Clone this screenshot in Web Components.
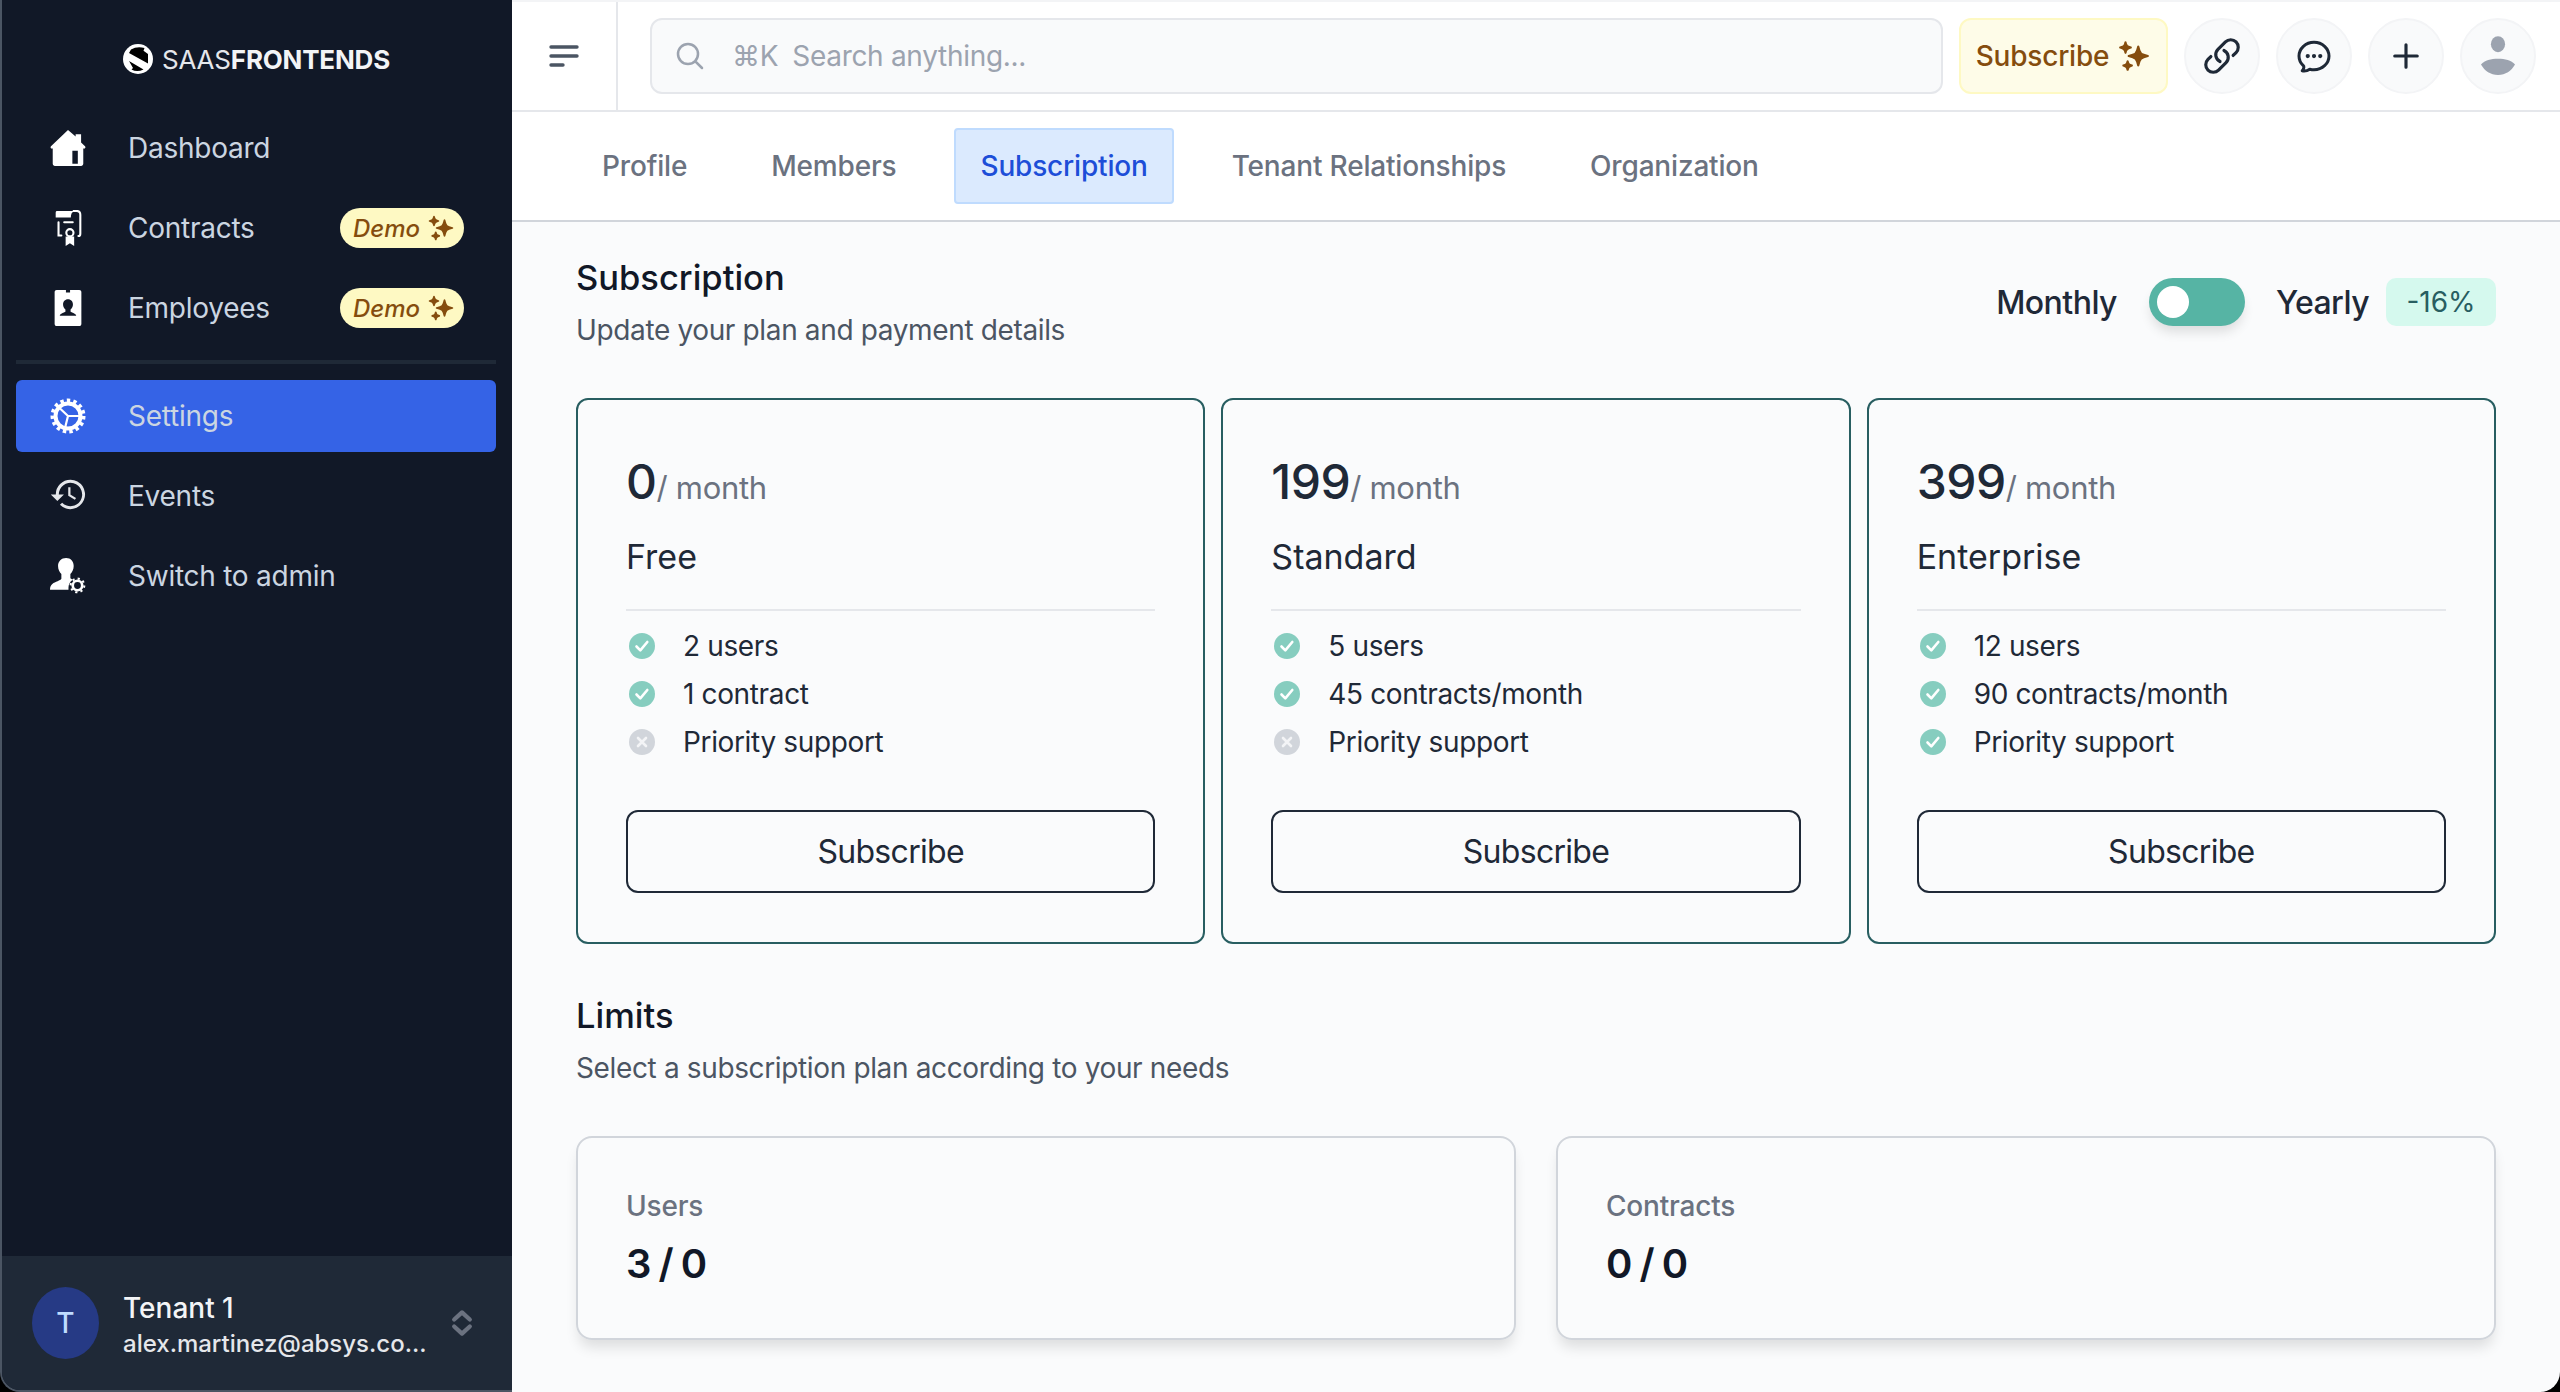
<!DOCTYPE html>
<html lang="en">
<head>
<meta charset="utf-8">
<title>Subscription</title>
<style>
    html, body { margin: 0; height: 100%; background: #000; overflow: hidden; }
    body { font-family: Inter, "Liberation Sans", sans-serif; }
</style>
</head>
<body>
<app-shell>
    <side-bar slot="side">
        <nav-item icon="home" label="Dashboard"></nav-item>
        <nav-item icon="contract" label="Contracts"><demo-badge></demo-badge></nav-item>
        <nav-item icon="badge" label="Employees"><demo-badge></demo-badge></nav-item>
        <nav-rule></nav-rule>
        <nav-item icon="gear" label="Settings" active></nav-item>
        <nav-item icon="history" label="Events"></nav-item>
        <nav-item icon="admin" label="Switch to admin"></nav-item>
        <tenant-card slot="foot" name="Tenant 1" email="alex.martinez@absys.co..."></tenant-card>
    </side-bar>
    <top-bar slot="top"></top-bar>
    <tab-bar slot="top">
        <tab-item>Profile</tab-item>
        <tab-item>Members</tab-item>
        <tab-item active>Subscription</tab-item>
        <tab-item>Tenant Relationships</tab-item>
        <tab-item>Organization</tab-item>
    </tab-bar>
    <page-section heading="Subscription" text="Update your plan and payment details">
        <billing-switch slot="aside"></billing-switch>
    </page-section>
    <plan-grid>
        <plan-card price="0" name="Free" features="2 users|1 contract|!Priority support"></plan-card>
        <plan-card price="199" name="Standard" features="5 users|45 contracts/month|!Priority support"></plan-card>
        <plan-card price="399" name="Enterprise" features="12 users|90 contracts/month|Priority support"></plan-card>
    </plan-grid>
    <page-section heading="Limits" text="Select a subscription plan according to your needs" class="limits"></page-section>
    <limit-grid>
        <limit-card label="Users" value="3 / 0"></limit-card>
        <limit-card label="Contracts" value="0 / 0"></limit-card>
    </limit-grid>
</app-shell>

<script>
// heroicons outline paths are stroked, the rest are filled and drawn by hand
const SPARKLES = `<svg viewBox="0 0 24 24" fill="currentColor" style="transform:scaleX(-1)"><path d="M9 4.5a.75.75 0 01.721.544l.813 2.846a3.75 3.75 0 002.576 2.576l2.846.813a.75.75 0 010 1.442l-2.846.813a3.75 3.75 0 00-2.576 2.576l-.813 2.846a.75.75 0 01-1.442 0l-.813-2.846a3.75 3.75 0 00-2.576-2.576l-2.846-.813a.75.75 0 010-1.442l2.846-.813A3.75 3.75 0 007.466 7.89l.813-2.846A.75.75 0 019 4.5zM18 1.5a.75.75 0 01.728.568l.258 1.036c.236.94.97 1.674 1.91 1.91l1.036.258a.75.75 0 010 1.456l-1.036.258c-.94.236-1.674.97-1.91 1.91l-.258 1.036a.75.75 0 01-1.456 0l-.258-1.036a2.625 2.625 0 00-1.91-1.91l-1.036-.258a.75.75 0 010-1.456l1.036-.258a2.625 2.625 0 001.91-1.91l.258-1.036A.75.75 0 0118 1.5zM16.5 15a.75.75 0 01.712.513l.394 1.183c.15.447.5.799.948.948l1.183.395a.75.75 0 010 1.422l-1.183.395c-.447.15-.799.5-.948.948l-.395 1.183a.75.75 0 01-1.422 0l-.395-1.183a1.5 1.5 0 00-.948-.948l-1.183-.395a.75.75 0 010-1.422l1.183-.395c.447-.15.799-.5.948-.948l.395-1.183A.75.75 0 0116.5 15z"/></svg>`;

const outline = (d, w = 1.5) => `<svg viewBox="0 0 24 24" fill="none" stroke="currentColor" stroke-width="${w}" stroke-linecap="round" stroke-linejoin="round"><path d="${d}"/></svg>`;

const ICONS = {
    home: `<svg viewBox="0 0 32 33" fill="#fff"><path fill-rule="evenodd" d="M16 0l7 6V4h5v7.500l3.600 3.300c.8.800.3 2.200-.8 2.200H30v14c0 1.100-.9 2-2 2H4c-1.100 0-2-.9-2-2V17H1.200C.1 17-.4 15.600.4 14.800zM20 19v12h5V19z"/></svg>`,
    contract: `<svg viewBox="0 0 30 38"><path fill="#fff" d="M3 1h19c-3 1-4 3-4 7H2V3c0-1 .5-2 1-2z"/><g fill="none" stroke="#fff" stroke-width="2.200" stroke-linecap="round"><path d="M21 1h3c3 0 4 2 4 4v20c0 1.500-.6 2.500-2 2.500M5 13v14h3M11 13h9"/><circle cx="17" cy="24" r="3.800"/></g><path fill="#fff" d="M12.500 28h9v10l-4.500-3-4.500 3z"/></svg>`,
    badge: `<svg viewBox="0 0 26 35"><path fill="#fff" fill-rule="evenodd" d="M2 0h9v2.500h4V0h9c1.100 0 2 .9 2 2v31c0 1.100-.9 2-2 2H2c-1.100 0-2-.9-2-2V2C0 .9.900 0 2 0zm11 9c-3 0-4.800 2.300-4.800 5.200 0 2 .9 3.800 2.300 4.800v2.200c-1.500 1-5 1.500-5.500 3.800h16c-.5-2.300-4-2.800-5.500-3.800V19c1.400-1 2.300-2.800 2.300-4.800C17.800 11.300 16 9 13 9z"/></svg>`,
    gear: `<svg viewBox="0 0 36 36" fill="none" stroke="#fff"><circle cx="18" cy="18" r="12.500" stroke-width="4"/><circle cx="18" cy="18" r="15.500" stroke-width="4" stroke-dasharray="3.400 3.090"/><path stroke-width="2.200" d="M18 18h12M18 18L9.500 10M18 18l-3 12"/></svg>`,
    history: `<svg viewBox="0.500 2 22.500 22" fill="#e5e7eb"><path d="M13.300 2.800a9.200 9.200 0 0 0-9.200 9.200H1l4.100 4.200L9.200 12H6a7.300 7.300 0 1 1 2.100 5.200l-1.400 1.300A9.200 9.200 0 1 0 13.300 2.800z"/><path fill="none" stroke="#e5e7eb" stroke-width="1.400" d="M12.600 7.500v5l3.800 2.300"/></svg>`,
    admin: `<svg viewBox="0 0 38 38"><path fill="#fff" d="M17 0c5 0 8 3.500 8 8.500 0 3.500-1.500 6.500-3.500 8.500v4.500c1 .5 1.500 1 2.500 1.400-3 2-4.500 5-4.500 8.600v2H0c0-6 4-7.500 8-9 2-.8 3.500-1.500 4-2.500V17c-2-2-3.500-5-3.500-8.500C8.500 3.500 12 0 17 0z"/><circle cx="29" cy="29" r="5" fill="none" stroke="#fff" stroke-width="2.800"/><circle cx="29" cy="29" r="7.200" fill="none" stroke="#fff" stroke-width="2.200" stroke-dasharray="2.300 3.350"/></svg>`,
    menu: `<svg viewBox="0 0 30 24" fill="none" stroke="#4b5563" stroke-width="3.400" stroke-linecap="round"><path d="M2 3h26M2 12h26M2 21h12"/></svg>`,
    search: outline("M21 21l-5.197-5.197m0 0A7.500 7.500 0 105.196 5.196a7.500 7.500 0 0010.607 10.607z", 1.9),
    link: outline("M13.190 8.688a4.500 4.500 0 011.242 7.244l-4.500 4.500a4.500 4.500 0 01-6.364-6.364l1.757-1.757m13.350-.622l1.757-1.757a4.500 4.500 0 00-6.364-6.364l-4.500 4.500a4.500 4.500 0 001.242 7.244", 1.9),
    chat: outline("M8.625 12a.375.375 0 11-.750 0 .375.375 0 01.750 0zm0 0H8.250m4.125 0a.375.375 0 11-.750 0 .375.375 0 01.750 0zm0 0H12m4.125 0a.375.375 0 11-.750 0 .375.375 0 01.750 0zm0 0h-.375M21 12c0 4.556-4.030 8.250-9 8.250a9.764 9.764 0 01-2.555-.337A5.972 5.972 0 015.410 20.970a5.969 5.969 0 01-.474-.065 4.480 4.480 0 00.978-2.025c.090-.457-.133-.901-.467-1.226C3.930 16.178 3 14.189 3 12c0-4.556 4.030-8.250 9-8.250s9 3.694 9 8.250z", 1.8),
    plus: outline("M12 4.500v15m7.500-7.500h-15", 2.1),
    person: `<svg viewBox="0 0 36 42" fill="#9ca3af"><ellipse cx="18" cy="8.500" rx="7.500" ry="8.500"/><path d="M0 30c4-4.500 10.500-6 18-6s14 1.500 18 6c-4 7-10 11-18 11S4 37 0 30z"/></svg>`,
    updown: outline("M6.500 9.500L12 4.500l5.500 5M6.500 14.500l5.500 5 5.500-5", 3),
    yes: `<svg viewBox="0 0 32 32"><circle cx="16" cy="16" r="13" fill="#86cdbf"/><path d="M10.500 16.500l3.800 3.800 7-8.300" fill="none" stroke="#fff" stroke-width="2.600" stroke-linecap="round" stroke-linejoin="round"/></svg>`,
    no: `<svg viewBox="0 0 32 32"><circle cx="16" cy="16" r="13" fill="#d1d5db"/><path d="M12 12l8 8M20 12l-8 8" stroke="#f3f4f6" stroke-width="2.600" stroke-linecap="round"/></svg>`,
    logo: `<svg viewBox="0 0 30 30"><circle cx="15" cy="15" r="15" fill="#fff"/><path fill="#000" d="M8 5.500Q14 2 21.500 4L20.500 6.800 25 10v9.500L6 9zM6 17l14.500 8.500Q14 28.500 8.500 25.500l1.500-1.500z"/></svg>`,
};

/** Small helper so every element below gets its open shadow root the same way */
class Base extends HTMLElement {
    constructor() {
        super();
        this.attachShadow({mode: "open"});
    }
    attr(name) {
        return this.getAttribute(name) || "";
    }
}

class AppShell extends Base {
    connectedCallback() {
        this.shadowRoot.innerHTML = `
        <style>
            :host { display: grid; grid-template-columns: 512px 1fr; height: 1392px; }
            main { background: #fafbfc; min-width: 0; display: flex; flex-direction: column; border-top: 2px solid #f3f4f6; border-bottom-right-radius: 20px; box-sizing: border-box; height: 1392px; overflow: hidden; }
            .body { padding: 0 64px 0 64px; display: flex; flex-direction: column; }
        </style>
        <slot name="side"></slot>
        <main>
            <slot name="top"></slot>
            <div class="body"><slot></slot></div>
        </main>`;
    }
}

class SideBar extends Base {
    connectedCallback() {
        this.shadowRoot.innerHTML = `
        <style>
            :host { display: flex; flex-direction: column; height: 1392px; box-sizing: border-box; background: #111827; border-left: 2px solid #4b5563; border-bottom: 2px solid #4b5563; border-bottom-left-radius: 20px; overflow: hidden; }
            .brand { height: 112px; flex: none; display: flex; align-items: center; gap: 9px; padding-left: 121px; color: #e5e7eb; font-size: 26px; letter-spacing: -.2px; box-sizing: border-box; padding-top: 6px; }
            .brand svg { width: 30px; height: 30px; }
            .brand b { color: #f3f4f6; font-weight: 700; }
            nav { flex: 1; display: flex; flex-direction: column; gap: 8px; padding: 0 16px 0 14px; }
        </style>
        <div class="brand">${ICONS.logo}<span>SAAS<b>FRONTENDS</b></span></div>
        <nav><slot></slot></nav>
        <slot name="foot"></slot>`;
    }
}

class NavItem extends Base {
    connectedCallback() {
        const active = this.hasAttribute("active");
        this.shadowRoot.innerHTML = `
        <style>
            :host { display: flex; align-items: center; height: 72px; border-radius: 6px; padding: 0 32px 0 0; font-size: 28px; letter-spacing: -.25px; color: #cbd5e1; background: ${active ? "#3563e6" : "transparent"}; }
            .icon { width: 112px; flex: none; display: flex; justify-content: center; padding-right: 8px; box-sizing: border-box; }
            .icon svg { display: block; height: 36px; width: 36px; }
            .label { flex: 1; }
        </style>
        <span class="icon">${ICONS[this.attr("icon")]}</span>
        <span class="label">${this.attr("label")}</span>
        <slot></slot>`;
    }
}

class NavRule extends Base {
    connectedCallback() {
        this.shadowRoot.innerHTML = `<style>:host { display: block; height: 4px; background: #1f2937; margin: 8px 0; }</style>`;
    }
}

class DemoBadge extends Base {
    connectedCallback() {
        this.shadowRoot.innerHTML = `
        <style>
            :host { display: inline-flex; align-items: center; gap: 7px; height: 40px; width: 124px; box-sizing: border-box; padding-left: 13px; border-radius: 20px; background: #fef9c3; color: #854d0e; font-size: 24px; font-weight: 500; font-style: italic; letter-spacing: 0; }
            svg { width: 28px; height: 28px; }
        </style>
        Demo${SPARKLES}`;
    }
}

class TenantCard extends Base {
    connectedCallback() {
        this.shadowRoot.innerHTML = `
        <style>
            :host { display: flex; align-items: center; height: 134px; box-sizing: border-box; padding: 0 0 0 30px; background: #1f2937; color: #e5e7eb; flex: none; }
            .avatar { width: 67px; height: 72px; border-radius: 50%; background: #263a85; color: #bfdbfe; display: grid; place-items: center; font-size: 28px; font-weight: 500; flex: none; margin-right: 24px; }
            .text { width: 306px; min-width: 0; padding-top: 2px; }
            .name { font-size: 28px; font-weight: 500; line-height: 40px; color: #f3f4f6; }
            .email { font-size: 24px; font-weight: 500; line-height: 32px; color: #e5e7eb; white-space: nowrap; }
            svg { width: 34px; height: 34px; color: #6b7280; margin-left: 16px; }
        </style>
        <div class="avatar">T</div>
        <div class="text"><div class="name">${this.attr("name")}</div><div class="email">${this.attr("email")}</div></div>
        ${ICONS.updown}`;
    }
}

class TopBar extends Base {
    connectedCallback() {
        this.shadowRoot.innerHTML = `
        <style>
            :host { display: flex; align-items: center; height: 110px; box-sizing: border-box; background: #fff; border-bottom: 2px solid #e5e7eb; flex: none; }
            .menu { width: 106px; align-self: stretch; border-right: 2px solid #e5e7eb; box-sizing: border-box; display: flex; align-items: center; padding-left: 37px; }
            .menu svg { width: 30px; height: 24px; }
            .search { flex: 1; height: 76px; margin: 0 16px 0 32px; box-sizing: border-box; display: flex; align-items: center; background: #f9fafb; border: 2px solid #e5e7eb; border-radius: 12px; color: #9ca3af; font-size: 28px; letter-spacing: -.3px; padding-left: 22px; }
            .search svg { width: 32px; height: 32px; margin-right: 26px; }
            .search .key { margin-right: 14px; }
            .sub { height: 76px; width: 209px; flex: none; box-sizing: border-box; display: flex; align-items: center; justify-content: center; gap: 8px; background: #fefce8; border: 2px solid #fef9c3; border-radius: 12px; color: #854d0e; font-size: 28px; letter-spacing: -.2px; font-weight: 500; }
            .sub svg { width: 34px; height: 34px; }
            .round { width: 76px; height: 76px; margin-left: 16px; flex: none; box-sizing: border-box; display: grid; place-items: center; border-radius: 50%; background: #f9fafb; border: 2px solid #f3f4f6; color: #1f2937; }
            .round svg { width: 40px; height: 40px; display: block; }
            .round.plus svg { width: 36px; height: 36px; }
            .round.me svg { width: 34px; height: 40px; }
            .end { width: 24px; flex: none; }
        </style>
        <div class="menu">${ICONS.menu}</div>
        <div class="search">${ICONS.search}<span class="key">⌘K</span><span>Search anything...</span></div>
        <div class="sub">Subscribe${SPARKLES}</div>
        <div class="round">${ICONS.link}</div>
        <div class="round">${ICONS.chat}</div>
        <div class="round plus">${ICONS.plus}</div>
        <div class="round me">${ICONS.person}</div>
        <div class="end"></div>`;
    }
}

class TabBar extends Base {
    connectedCallback() {
        this.shadowRoot.innerHTML = `
        <style>
            :host { display: flex; align-items: center; gap: 32px; height: 110px; box-sizing: border-box; padding: 0 0 0 64px; background: #fff; border-bottom: 2px solid #d1d5db; flex: none; }
        </style>
        <slot></slot>`;
    }
}

class TabItem extends Base {
    connectedCallback() {
        const on = this.hasAttribute("active");
        this.shadowRoot.innerHTML = `
        <style>
            :host { display: flex; align-items: center; height: 76px; box-sizing: border-box; padding: 0 24px; border-radius: 4px; font-size: 28px; letter-spacing: -.18px; font-weight: 500; border: 2px solid ${on ? "#bfdbfe" : "transparent"}; background: ${on ? "#dbeafe" : "transparent"}; color: ${on ? "#1d4ed8" : "#6b7280"}; }
        </style>
        <slot></slot>`;
    }
}

class PageSection extends Base {
    connectedCallback() {
        const limits = this.classList.contains("limits");
        this.shadowRoot.innerHTML = `
        <style>
            :host { display: flex; justify-content: space-between; align-items: flex-start; padding-top: ${limits ? 48 : 32}px; }
            h2 { margin: 0; font-size: 34.5px; line-height: 48px; font-weight: 500; color: #111827; }
            p { margin: 8px 0 0; font-size: 28px; line-height: 40px; letter-spacing: -.36px; color: #4b5563; }
        </style>
        <div><h2>${this.attr("heading")}</h2><p>${this.attr("text")}</p></div>
        <slot name="aside"></slot>`;
    }
}

class BillingSwitch extends Base {
    connectedCallback() {
        this.shadowRoot.innerHTML = `
        <style>
            :host { display: flex; align-items: center; font-size: 32px; letter-spacing: -.55px; font-weight: 500; color: #1f2937; margin-top: 24px; }
            .track { width: 96px; height: 48px; border-radius: 24px; background: #56b4a4; margin: 0 31px 0 32px; box-shadow: 0 8px 12px -2px rgba(0,0,0,.12); display: flex; align-items: center; padding-left: 8px; box-sizing: border-box; }
            .knob { width: 32px; height: 32px; border-radius: 50%; background: #fff; }
            .off { width: 110px; height: 48px; margin-left: 17px; border-radius: 10px; background: #d5f9ee; color: #285e61; font-size: 28px; letter-spacing: 0; font-weight: 400; display: grid; place-items: center; }
        </style>
        <span>Monthly</span><div class="track"><div class="knob"></div></div><span>Yearly</span><div class="off">-16%</div>`;
    }
}

class PlanGrid extends Base {
    connectedCallback() {
        this.shadowRoot.innerHTML = `
        <style>:host { display: grid; grid-template-columns: repeat(3, 1fr); gap: 16px; margin-top: 48px; }</style>
        <slot></slot>`;
    }
}

class PlanCard extends Base {
    connectedCallback() {
        const rows = this.attr("features").split("|").map(f => {
            const off = f[0] === "!";
            return `<li>${off ? ICONS.no : ICONS.yes}<span>${off ? f.slice(1) : f}</span></li>`;
        }).join("");
        this.shadowRoot.innerHTML = `
        <style>
            :host { display: block; height: 546px; box-sizing: border-box; border: 2px solid #285e61; border-radius: 12px; padding: 48px; color: #1f2937; }
            .price { font-size: 48px; line-height: 64px; margin-top: 2px; font-weight: 500; letter-spacing: -.5px; display: flex; align-items: baseline; }
            .price small { font-size: 31px; line-height: 1; font-weight: 400; letter-spacing: -.3px; color: #6b7280; }
            .name { font-size: 34px; line-height: 48px; margin-top: 19px; padding-bottom: 28px; border-bottom: 2px solid #e5e7eb; }
            ul { list-style: none; margin: 15px 0 0; padding: 0; display: flex; flex-direction: column; gap: 8px; font-size: 28px; letter-spacing: -.36px; }
            li { display: flex; align-items: center; gap: 25px; height: 40px; }
            li svg { width: 32px; height: 32px; flex: none; }
            button { display: block; width: 100%; height: 83px; margin-top: 48px; background: transparent; border: 2px solid #1f2937; border-radius: 12px; font: inherit; font-size: 32px; letter-spacing: -.7px; color: #1f2937; }
        </style>
        <div class="price">${this.attr("price")}<small>/ month</small></div>
        <div class="name">${this.attr("name")}</div>
        <ul>${rows}</ul>
        <button>Subscribe</button>`;
    }
}

class LimitGrid extends Base {
    connectedCallback() {
        this.shadowRoot.innerHTML = `
        <style>:host { display: grid; grid-template-columns: 1fr 1fr; gap: 40px; margin-top: 48px; }</style>
        <slot></slot>`;
    }
}

class LimitCard extends Base {
    connectedCallback() {
        this.shadowRoot.innerHTML = `
        <style>
            :host { display: block; height: 204px; box-sizing: border-box; border: 2px solid #d1d5db; border-radius: 16px; padding: 48px; box-shadow: 0 10px 14px -3px rgba(0,0,0,.12); }
            .label { font-size: 28px; line-height: 40px; font-weight: 500; letter-spacing: -.2px; color: #6b7280; }
            .value { font-size: 40px; line-height: 48px; font-weight: 600; letter-spacing: -1.5px; color: #111827; margin-top: 14px; }
        </style>
        <div class="label">${this.attr("label")}</div>
        <div class="value">${this.attr("value")}</div>`;
    }
}

customElements.define("app-shell", AppShell);
customElements.define("side-bar", SideBar);
customElements.define("nav-item", NavItem);
customElements.define("nav-rule", NavRule);
customElements.define("demo-badge", DemoBadge);
customElements.define("tenant-card", TenantCard);
customElements.define("top-bar", TopBar);
customElements.define("tab-bar", TabBar);
customElements.define("tab-item", TabItem);
customElements.define("page-section", PageSection);
customElements.define("billing-switch", BillingSwitch);
customElements.define("plan-grid", PlanGrid);
customElements.define("plan-card", PlanCard);
customElements.define("limit-grid", LimitGrid);
customElements.define("limit-card", LimitCard);
</script>
</body>
</html>
